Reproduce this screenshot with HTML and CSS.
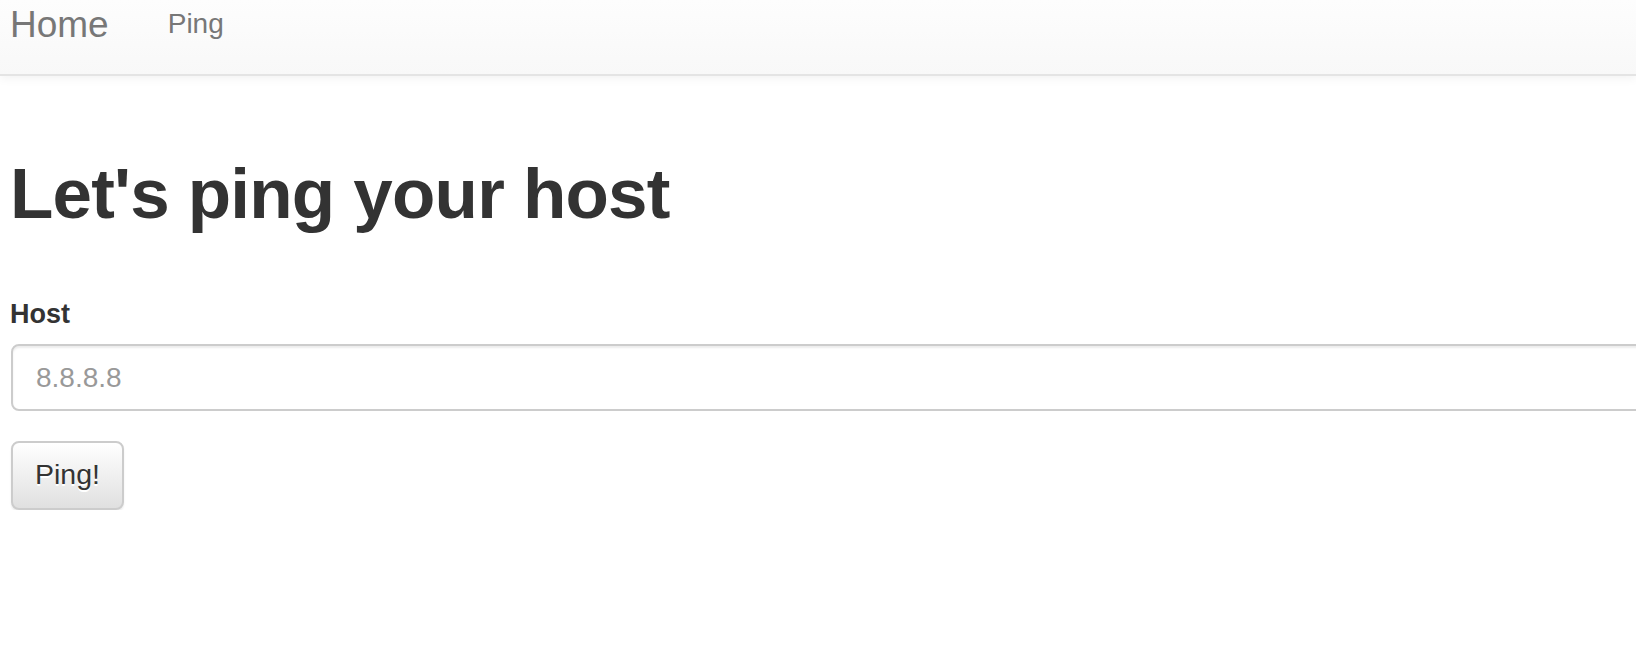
FILE: index.html
```html
<!DOCTYPE html>
<html lang="en">

<head>
    <meta charset="UTF-8">
    <meta name="viewport" content="width=device-width, initial-scale=1.0">
    <title>Ping</title>
    <link rel="stylesheet" href="styles.css">
</head>

<body>

    <!-- NAVBAR -->
    <nav class="navbar">
        <a class="brand" href="#">Home</a>
        <a class="nav-link" href="#">Ping</a>
    </nav>

    <div class="container">
        <h1>Let's ping your host</h1>

        <form class="ping-form" onsubmit="return false;">
            <label for="host">Host</label>
            <input type="text" id="host" name="host" placeholder="8.8.8.8">
            <button type="submit" class="btn">Ping!</button>
        </form>
    </div>

</body>

</html>
```

FILE: styles.css
```css
html {
    overflow: hidden;
}

body {
    margin: 0;
    font-family: "Liberation Sans", Arial, sans-serif;
    color: #333;
    background-color: #fff;
}

.navbar {
    display: flex;
    align-items: flex-start;
    height: 74px;
    padding-left: 10px;
    background-image: linear-gradient(to bottom, #fdfdfd 0, #f8f8f8 100%);
    border-bottom: 2px solid #e4e4e4;
    box-shadow: 0 2px 10px rgba(0, 0, 0, 0.06);
}

.navbar a {
    color: #777;
    text-decoration: none;
}

.navbar .brand {
    padding-top: 6px;
    font-size: 37px;
    line-height: 37px;
}

.navbar .nav-link {
    margin-left: 59px;
    padding-top: 10px;
    font-size: 28px;
    line-height: 27px;
}

.container {
    padding: 0 11px;
}

h1 {
    margin: 79px 0 61px -1px;
    font-size: 71px;
    line-height: 78px;
    font-weight: bold;
    letter-spacing: -0.8px;
}

.ping-form label {
    display: block;
    margin-left: -1px;
    font-size: 27px;
    line-height: 40px;
    font-weight: bold;
}

.ping-form input {
    display: block;
    box-sizing: border-box;
    width: 1700px;
    height: 67px;
    margin-top: 10px;
    padding: 0 23px;
    font-family: inherit;
    font-size: 28px;
    color: #555;
    border: 2px solid #ccc;
    border-radius: 8px;
    box-shadow: inset 0 2px 2px rgba(0, 0, 0, 0.075);
    outline: none;
}

.ping-form input::placeholder {
    color: #999;
}

.ping-form .btn {
    display: block;
    margin-top: 30px;
    padding: 12px 22px 14px;
    font-family: inherit;
    font-size: 28.5px;
    line-height: 39px;
    color: #333;
    text-shadow: 0 2px 0 #fff;
    background-image: linear-gradient(to bottom, #fff 0, #e0e0e0 100%);
    border: 2px solid #ccc;
    border-radius: 8px;
    box-shadow: 0 2px 2px rgba(0, 0, 0, 0.075);
    cursor: pointer;
}
```
